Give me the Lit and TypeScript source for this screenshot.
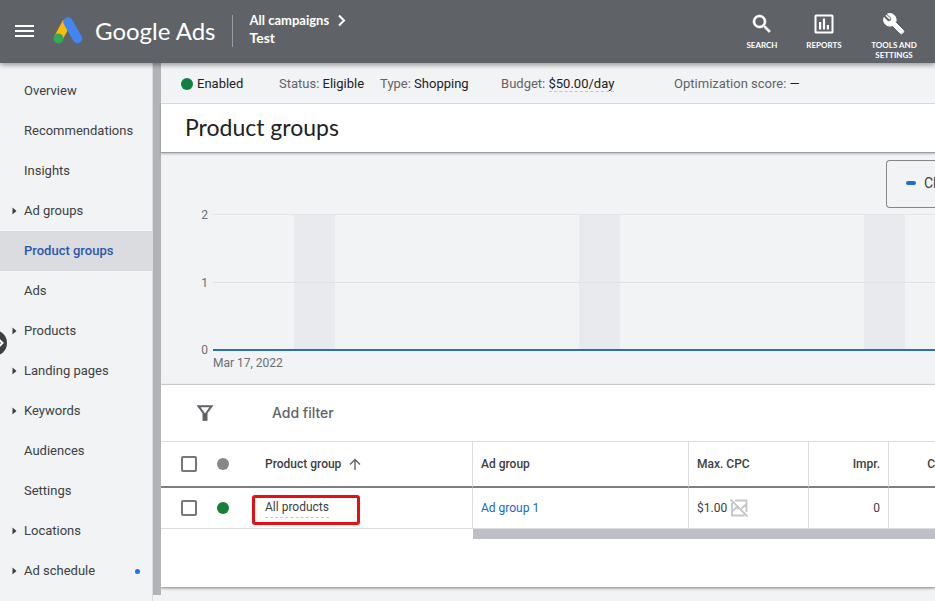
import { LitElement, html, css, svg, nothing } from "lit";
import { customElement, property } from "lit/decorators.js";
import { classMap } from "lit/directives/class-map.js";

interface NavItem {
  label: string;
  expandable?: boolean;
  active?: boolean;
  flagged?: boolean;
}

const NAV: NavItem[] = [
  { label: "Overview" },
  { label: "Recommendations" },
  { label: "Insights" },
  { label: "Ad groups", expandable: true },
  { label: "Product groups", active: true },
  { label: "Ads" },
  { label: "Products", expandable: true },
  { label: "Landing pages", expandable: true },
  { label: "Keywords", expandable: true },
  { label: "Audiences" },
  { label: "Settings" },
  { label: "Locations", expandable: true },
  { label: "Ad schedule", expandable: true, flagged: true },
];

const icons = {
  search: svg`<path d="M15.5 14h-.79l-.28-.27A6.47 6.47 0 0 0 16 9.5 6.5 6.5 0 1 0 9.5 16c1.61 0 3.09-.59 4.23-1.57l.27.28v.79l5 4.99L20.49 19l-4.99-5zm-6 0C7.01 14 5 11.99 5 9.5S7.01 5 9.5 5 14 7.01 14 9.5 11.99 14 9.5 14z" stroke="currentColor" stroke-width="0.6"/>`,
  reports: svg`<path fill-rule="evenodd" d="M4 2.5h16A1.5 1.5 0 0 1 21.500 4v16a1.500 1.500 0 0 1-1.500 1.500H4A1.500 1.500 0 0 1 2.500 20V4A1.500 1.500 0 0 1 4 2.500zM4.500 4.500v15h15v-15zM7 10h2.200v7.500H7zM10.900 6.500h2.200v11h-2.200zM14.800 13H17v4.500h-2.200z"/>`,
  tools: svg`<path d="M21.300 18.300l-7.700-7.700c1-2.600.5-5.500-1.500-7.300C10.200 1.600 7.700 1.200 5.500 2l4.200 4.100-.7 2.900-2.900.7L2 5.500C1.200 7.700 1.600 10.200 3.300 12.100c1.800 2 4.700 2.500 7.300 1.500l7.700 7.700c.6.600 1.400.6 2 0l1-1c.6-.6.6-1.400 0-2z" stroke="currentColor" stroke-width="1" stroke-linejoin="round"/><path d="M4 3.200l4 3.800" stroke="currentColor" stroke-width="1.500"/>`,
};

@customElement("top-bar")
export class TopBar extends LitElement {
  static styles = css`
    :host { display: block; position: relative; z-index: 2; }
    .bar {
      display: flex;
      align-items: flex-start;
      min-height: 63px;
      background: #5f6368;
      color: #fff;
      box-shadow: 0 2px 5px rgba(0, 0, 0, 0.38);
    }
    button { border: 0; background: none; color: inherit; padding: 0; font: inherit; }
    .menu { display: flex; flex-direction: column; gap: 3px; margin: 25px 19px 0 15px; }
    .menu span { width: 19px; height: 2px; background: #fff; }
    .logo { width: 30px; height: 28px; margin-top: 16px; }
    .brand { font: 400 24px/32px Lato, sans-serif; margin: 15px 16px 0 12px; white-space: nowrap; }
    .crumbs {
      margin-top: 15px;
      height: 32px;
      border-left: 1px solid #9a9da1;
      padding-left: 17px;
      white-space: nowrap;
    }
    .crumbs a { display: flex; align-items: center; gap: 8px; color: inherit; text-decoration: none; margin-top: -4px; font: 700 13px/18px Lato, sans-serif; }
    .crumbs svg { width: 9px; height: 13px; }
    .crumbs strong { display: block; font: 700 14px/18px Lato, sans-serif; }
    .tools { display: flex; margin: 12px 2px 0 auto; }
    .tool {
      display: flex;
      flex-direction: column;
      align-items: center;
      font: 700 8px/10px Lato, sans-serif;
      text-transform: uppercase;
      width: 62px;
    }
    .tool.wide { width: 78px; }
    .tool svg { width: 24px; height: 24px; fill: currentColor; margin-bottom: 4px; }
  `;

  render() {
    return html`
      <header class="bar">
        <button class="menu" aria-label="Main menu"><span></span><span></span><span></span></button>
        <svg class="logo" viewBox="0 0 30 28" aria-hidden="true">
          <path d="M14 6 5.500 22" stroke="#fbbc04" stroke-width="9" stroke-linecap="butt" />
          <path d="M15 6 24.500 22.500" stroke="#4285f4" stroke-width="9.500" stroke-linecap="round" />
          <circle cx="5.500" cy="22.500" r="5" fill="#34a853" />
        </svg>
        <div class="brand">Google Ads</div>
        <div class="crumbs">
          <a href="#campaigns">All campaigns
            <svg viewBox="0 0 9 13" aria-hidden="true"><path d="M2 1.500 7 6.500 2 11.500" fill="none" stroke="#fff" stroke-width="2" /></svg>
          </a>
          <strong>Test</strong>
        </div>
        <nav class="tools" aria-label="Tools">
          <button class="tool"><svg viewBox="0 0 24 24">${icons.search}</svg>Search</button>
          <button class="tool"><svg viewBox="0 0 24 24">${icons.reports}</svg>Reports</button>
          <button class="tool wide"><svg viewBox="0 0 24 24">${icons.tools}</svg>Tools and<br />settings</button>
        </nav>
      </header>
    `;
  }
}

@customElement("side-nav")
export class SideNav extends LitElement {
  @property({ attribute: false }) items: NavItem[] = [];

  static styles = css`
    :host { display: flex; position: relative; width: 161px; flex: none; font: 400 13px/20px Roboto, sans-serif; }
    nav { flex: 1; padding: 8px 0; border-right: 1px solid #dadce0; background: #f1f3f4; }
    .item {
      display: flex;
      align-items: center;
      height: 40px;
      padding: 0 12px;
      color: #3c4043;
      text-decoration: none;
    }
    .active { background: #dadce0; color: #2a56b0; font-weight: 500; }
    .mark { width: 12px; }
    .caret { display: block; width: 5px; height: 8px; fill: #3c4043; }
    .flag { width: 5px; height: 5px; border-radius: 50%; background: #1a73e8; margin-left: auto; }
    .thumb { width: 8px; margin-bottom: 6px; background: #b1b3b6; }
    .expand {
      position: absolute;
      left: -19px;
      top: 267px;
      width: 26px;
      height: 26px;
      border: 0;
      padding: 0;
      border-radius: 50%;
      background: #3c4043;
    }
    .expand svg { display: block; width: 26px; height: 26px; }
  `;

  render() {
    return html`
      <nav aria-label="Campaign">
        ${this.items.map(
          (item) => html`
            <a class=${classMap({ item: true, active: !!item.active })} href="#${item.label}">
              <span class="mark">
                ${item.expandable
                  ? html`<svg class="caret" viewBox="0 0 5 8"><path d="M0.500 0.500 4.500 4 0.500 7.500z" /></svg>`
                  : nothing}
              </span>
              ${item.label}
              ${item.flagged ? html`<span class="flag"></span>` : nothing}
            </a>
          `
        )}
      </nav>
      <div class="thumb"></div>
      <button class="expand" aria-label="Show navigation">
        <svg viewBox="0 0 26 26"><path d="M18 9.500 21.500 13 18 16.500" fill="none" stroke="#fff" stroke-width="2" /></svg>
      </button>
    `;
  }
}

@customElement("trend-chart")
export class TrendChart extends LitElement {
  static styles = css`
    :host { display: block; overflow: hidden; background: #f1f3f4; font: 400 12px/16px Roboto, sans-serif; color: #6b6f73; padding: 7px 0 13px; border-bottom: 1px solid #dadce0; }
    .metric {
      box-sizing: border-box;
      display: flex;
      align-items: center;
      gap: 8px;
      width: 49px;
      height: 48px;
      margin: 0 0 6px auto;
      padding: 0 0 2px 19px;
      border: 1px solid #80868b;
      border-right: 0;
      border-radius: 4px 0 0 4px;
      color: #3c4043;
      font-size: 14px;
      overflow: hidden;
    }
    .dash { flex: none; width: 10px; height: 4px; border-radius: 2px; background: #1f6fd0; }
    .plot { display: grid; grid-template-columns: 47px 1fr; column-gap: 5px; }
    .axis { display: flex; flex-direction: column; justify-content: space-between; text-align: right; margin: -7px 0; }
    .area {
      position: relative;
      display: flex;
      gap: 244px;
      height: 134px;
      padding-left: 81px;
      border-top: 1px solid #e3e5e8;
      border-bottom: 2px solid #2a6ebb;
      overflow: hidden;
    }
    .weekend { flex: none; width: 41px; background: #e8eaed; }
    .mid { position: absolute; left: 0; right: 0; top: 67px; height: 1px; background: #dfe1e4; }
    .date { margin: 4px 0 0 52px; }
  `;

  render() {
    return html`
      <div class="metric"><span class="dash"></span>Clicks</div>
      <div class="plot">
        <div class="axis"><span>2</span><span>1</span><span>0</span></div>
        <div class="area">
          ${[0, 1, 2, 3, 4, 5].map(() => html`<div class="weekend"></div>`)}
          <div class="mid"></div>
        </div>
      </div>
      <div class="date">Mar 17, 2022</div>
    `;
  }
}

@customElement("group-table")
export class GroupTable extends LitElement {
  static styles = css`
    :host { display: block; overflow: hidden; background: #fff; font: 400 12px/16px Roboto, sans-serif; color: #3c4043; padding-bottom: 48px; box-shadow: 0 1px 3px rgba(0, 0, 0, 0.5); }
    .filter { display: flex; align-items: center; gap: 57px; height: 56px; padding-left: 34px; border-bottom: 1px solid #dadce0; }
    .filter svg { width: 20px; height: 20px; }
    .filter button { border: 0; padding: 0; background: none; color: #5f6368; font: 500 14px/20px Inter, sans-serif; }
    table { border-collapse: separate; border-spacing: 0; table-layout: fixed; width: 100%; min-width: 824px; }
    th, td { box-sizing: border-box; padding: 0 8px; text-align: left; border-right: 1px solid #dadce0; }
    th { height: 46px; font-weight: 500; border-bottom: 2px solid #7d7f82; }
    td { height: 41px; border-bottom: 1px solid #dadce0; }
    .check { width: 48px; padding: 0 0 0 20px; border-right: 0; }
    .state { width: 43px; padding: 0 0 0 8px; border-right: 0; }
    .name { width: 221px; padding: 0 0 0 13px; }
    td.name { padding: 7px 0 0; vertical-align: top; }
    .group { width: 216px; }
    .cpc { width: 120px; }
    .impr { width: 80px; text-align: right; }
    .clicks { width: 96px; text-align: right; padding-right: 24px; }
    input { appearance: none; display: block; box-sizing: border-box; width: 16px; height: 16px; margin: 0; border: 2px solid #757779; border-radius: 2px; }
    .dot { display: block; width: 12px; height: 12px; border-radius: 50%; background: #85878a; }
    .on { background: #188038; }
    .sort, .bid { display: flex; align-items: center; }
    .sort { gap: 8px; }
    .bid { gap: 2px; }
    .sort svg { width: 12px; height: 12px; }
    .bid svg { width: 20px; height: 20px; }
    .picked { box-sizing: border-box; width: 108px; height: 30px; padding-left: 10px; border: 3px solid #e60f13; border-radius: 3px; }
    .picked button { display: block; height: 20px; padding: 0 0 2px; border: 0; border-bottom: 1px dashed #c4c7ca; background: none; color: inherit; font: inherit; }
    a { color: #1967d2; text-decoration: none; }
    .scroll { height: 10px; margin-left: 312px; background: #bdbfc4; }
  `;

  render() {
    return html`
      <div class="filter">
        <svg viewBox="0 0 20 20" aria-hidden="true">
          <path d="M3.500 3.200h13L11.500 10v6.800h-3V10z" fill="none" stroke="#5f6368" stroke-width="2" />
          <path d="M8 10h4v7.500H8z" fill="#5f6368" />
        </svg>
        <button>Add filter</button>
      </div>
      <table>
        <thead>
          <tr>
            <th class="check"><input type="checkbox" aria-label="Select all rows" /></th>
            <th class="state"><span class="dot"></span></th>
            <th class="name">
              <span class="sort">Product group
                <svg viewBox="0 0 12 12" aria-hidden="true"><path d="M6 12V1.500M1 6.500l5-5 5 5" fill="none" stroke="#5f6368" stroke-width="1.400" /></svg>
              </span>
            </th>
            <th class="group">Ad group</th>
            <th class="cpc">Max. CPC</th>
            <th class="impr">Impr.</th>
            <th class="clicks">Clicks</th>
          </tr>
        </thead>
        <tbody>
          <tr>
            <td class="check"><input type="checkbox" aria-label="Select All products" /></td>
            <td class="state"><span class="dot on"></span></td>
            <td class="name"><div class="picked"><button>All products</button></div></td>
            <td class="group"><a href="#ad-group-1">Ad group 1</a></td>
            <td class="cpc">
              <span class="bid">$1.00
                <svg viewBox="0 0 20 20" aria-hidden="true" fill="none" stroke="#c4c6c8" stroke-width="1.800">
                  <path d="M6 2.500h11.500v11.500M3 5v12.500h12.500M1.500 1.500l17 17M4 13l3.500-4 2 2M12.500 10.500l4.500-4" />
                </svg>
              </span>
            </td>
            <td class="impr">0</td>
            <td class="clicks"></td>
          </tr>
        </tbody>
      </table>
      <div class="scroll"></div>
    `;
  }
}

@customElement("app-root")
export class AppRoot extends LitElement {
  static styles = css`
    :host { display: flex; flex-direction: column; min-height: 100vh; overflow: hidden; background: #f1f3f4; font: 400 13px/20px Roboto, sans-serif; color: #202124; }
    .layout { display: flex; flex: 1; }
    main { flex: 1; min-width: 0; }
    .status { display: flex; align-items: center; box-sizing: border-box; height: 41px; padding: 1px 0 0 20px; border-bottom: 1px solid #dadce0; white-space: nowrap; color: #5f6368; }
    .status b { font-weight: 400; color: #202124; }
    .status .budget { border-bottom: 1px dashed #c4c7ca; }
    .enabled { display: flex; align-items: center; gap: 4px; width: 98px; }
    .type { margin-left: 16px; width: 121px; }
    .money { width: 173px; }
    .dot { width: 12px; height: 12px; border-radius: 50%; background: #0d8043; }
    h1 { position: relative; margin: 0; padding: 7px 24px 9px; font: 400 23px/32px Lato, sans-serif; background: #fff; border-bottom: 1px solid #9a9da1; box-shadow: 0 1px 2px rgba(0, 0, 0, 0.25); }
  `;

  render() {
    return html`
      <top-bar></top-bar>
      <div class="layout">
        <side-nav .items=${NAV}></side-nav>
        <main>
          <div class="status">
            <span class="enabled"><span class="dot"></span><b>Enabled</b></span>
            <span>Status: <b>Eligible</b></span>
            <span class="type">Type: <b>Shopping</b></span>
            <span class="money">Budget: <b class="budget">$50.00/day</b></span>
            <span>Optimization score: <b>—</b></span>
          </div>
          <h1>Product groups</h1>
          <trend-chart></trend-chart>
          <group-table></group-table>
        </main>
      </div>
    `;
  }
}
